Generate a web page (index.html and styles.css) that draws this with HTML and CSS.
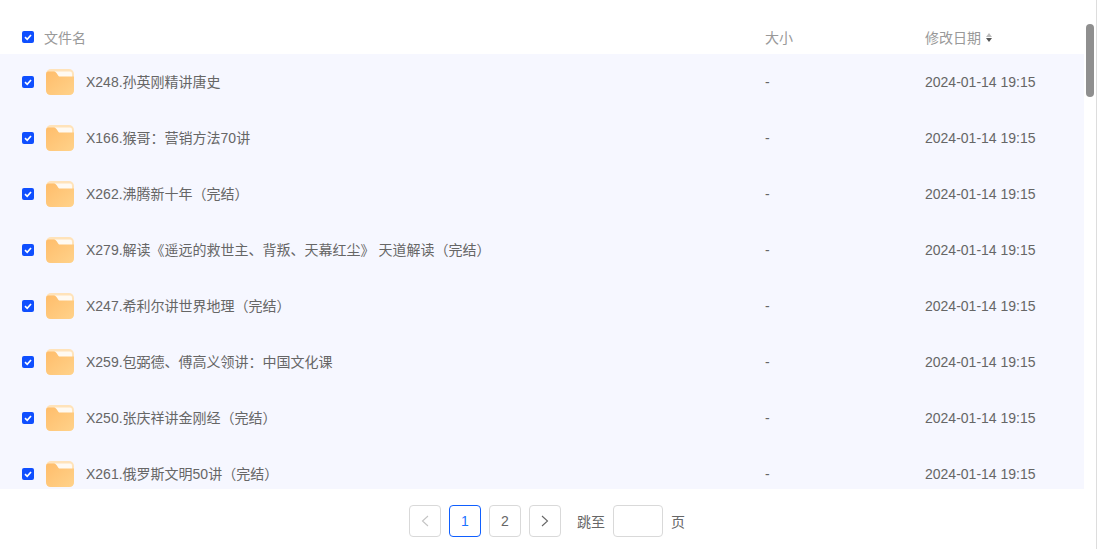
FILE: index.html
```html
<!DOCTYPE html>
<html>
<head>
    <meta charset="UTF-8">
    <title>文件列表</title>
    <link rel="stylesheet" href="styles.css">
</head>
<body>
    <svg class="defs" width="0" height="0">
        <defs>
            <linearGradient id="folderfill" x1="0" y1="0" x2="1" y2="1">
                <stop offset="0" stop-color="#ffbd6b"/>
                <stop offset="1" stop-color="#ffd28a"/>
            </linearGradient>
            <symbol id="folder" viewBox="0 0 28 26">
                <rect width="28" height="26" rx="5" fill="#ffe3ba"/>
                <path d="M9 2.5 H24 Q26 2.5 26 4.5 V8 H12 Z" fill="#fffaf2"/>
                <path d="M0 5 Q0 2.5 2 2.5 H8 Q9.5 2.5 10.5 4 L12.5 7 Q13 7.5 14 7.5 H28 V21 Q28 26 23 26 H5 Q0 26 0 21 Z" fill="url(#folderfill)"/>
            </symbol>
            <symbol id="check" viewBox="0 0 12 12">
                <rect width="12" height="12" rx="2" fill="#0f4fff"/>
                <path d="M3 6.2 L5.2 8.3 L9 4" fill="none" stroke="#fff" stroke-width="1.7"/>
            </symbol>
        </defs>
    </svg>
    <div class="page">
        <div class="head">
            <div class="col-name">
                <svg class="check"><use href="#check"/></svg>
                <span class="head-name">文件名</span>
            </div>
            <div class="col-size">大小</div>
            <div class="col-date">修改日期<span class="sort"><i class="up"></i><i class="down"></i></span></div>
        </div>
        <div class="main">
            <div class="list">
                <div class="row">
                    <div class="col-name"><svg class="check"><use href="#check"/></svg><svg class="folder"><use href="#folder"/></svg><span class="file-name">X248.孙英刚精讲唐史</span></div>
                    <div class="col-size">-</div>
                    <div class="col-date">2024-01-14 19:15</div>
                </div>
                <div class="row">
                    <div class="col-name"><svg class="check"><use href="#check"/></svg><svg class="folder"><use href="#folder"/></svg><span class="file-name">X166.猴哥：营销方法70讲</span></div>
                    <div class="col-size">-</div>
                    <div class="col-date">2024-01-14 19:15</div>
                </div>
                <div class="row">
                    <div class="col-name"><svg class="check"><use href="#check"/></svg><svg class="folder"><use href="#folder"/></svg><span class="file-name">X262.沸腾新十年（完结）</span></div>
                    <div class="col-size">-</div>
                    <div class="col-date">2024-01-14 19:15</div>
                </div>
                <div class="row">
                    <div class="col-name"><svg class="check"><use href="#check"/></svg><svg class="folder"><use href="#folder"/></svg><span class="file-name">X279.解读《遥远的救世主、背叛、天幕红尘》 天道解读（完结）</span></div>
                    <div class="col-size">-</div>
                    <div class="col-date">2024-01-14 19:15</div>
                </div>
                <div class="row">
                    <div class="col-name"><svg class="check"><use href="#check"/></svg><svg class="folder"><use href="#folder"/></svg><span class="file-name">X247.希利尔讲世界地理（完结）</span></div>
                    <div class="col-size">-</div>
                    <div class="col-date">2024-01-14 19:15</div>
                </div>
                <div class="row">
                    <div class="col-name"><svg class="check"><use href="#check"/></svg><svg class="folder"><use href="#folder"/></svg><span class="file-name">X259.包弼德、傅高义领讲：中国文化课</span></div>
                    <div class="col-size">-</div>
                    <div class="col-date">2024-01-14 19:15</div>
                </div>
                <div class="row">
                    <div class="col-name"><svg class="check"><use href="#check"/></svg><svg class="folder"><use href="#folder"/></svg><span class="file-name">X250.张庆祥讲金刚经（完结）</span></div>
                    <div class="col-size">-</div>
                    <div class="col-date">2024-01-14 19:15</div>
                </div>
                <div class="row">
                    <div class="col-name"><svg class="check"><use href="#check"/></svg><svg class="folder"><use href="#folder"/></svg><span class="file-name">X261.俄罗斯文明50讲（完结）</span></div>
                    <div class="col-size">-</div>
                    <div class="col-date">2024-01-14 19:15</div>
                </div>
            </div>
        </div>
        <div class="pager">
            <button class="page-btn disabled"><svg width="10" height="12" viewBox="0 0 10 12"><path d="M8 1 L2.5 6 L8 11" fill="none" stroke="#c4c4c4" stroke-width="1.1"/></svg></button>
            <button class="page-btn current">1</button>
            <button class="page-btn">2</button>
            <button class="page-btn"><svg width="10" height="12" viewBox="0 0 10 12"><path d="M2 1 L7.5 6 L2 11" fill="none" stroke="#666" stroke-width="1.1"/></svg></button>
            <span class="jump">跳至</span>
            <input class="jump-input" type="text">
            <span class="jump-end">页</span>
        </div>
        <div class="thumb"></div>
    </div>
</body>
</html>
```

FILE: styles.css
```css
*{
    margin: 0;
    padding: 0;
    box-sizing: border-box;
}
html,body{
    height: 100%;
    overflow: hidden;
}
body{
    background-color: white;
    font-family: "Liberation Sans", "Noto Sans CJK SC", sans-serif;
    font-size: 14px;
    color: #666;
}
.defs{
    position: absolute;
}
.page{
    position: relative;
    height: 549px;
    display: flex;
    flex-direction: column;
    border-right: 1px solid #ddd;
}
.head{
    height: 54px;
    padding-top: 20px;
    display: flex;
    align-items: center;
    color: #999;
    flex: none;
}
.main{
    height: 435px;
    padding-right: 12px;
    overflow: hidden;
    flex: none;
}
.list{
    background-color: #f6f7ff;
}
.row{
    height: 56px;
    display: flex;
    align-items: center;
}
.col-name{
    width: 765px;
    padding-left: 22px;
    display: flex;
    align-items: center;
    flex: none;
}
.col-size{
    width: 160px;
    flex: none;
}
.col-date{
    flex: 1;
    display: flex;
    align-items: center;
}
.check{
    width: 12px;
    height: 12px;
    flex: none;
}
.head-name{
    margin-left: 10px;
}
.file-name{
    margin-bottom: 2px;
}
.folder{
    width: 28px;
    height: 26px;
    margin-left: 12px;
    margin-right: 12px;
    flex: none;
}
.sort{
    display: inline-flex;
    flex-direction: column;
    gap: 1px;
    margin-left: 5px;
}
.sort i{
    display: block;
    width: 0;
    height: 0;
    border-left: 3.5px solid transparent;
    border-right: 3.5px solid transparent;
}
.sort .up{
    border-bottom: 4px solid #bbb;
}
.sort .down{
    border-top: 4px solid #555;
}
.pager{
    flex: 1;
    display: flex;
    align-items: center;
    justify-content: center;
    padding-right: 2px;
    padding-top: 4px;
}
.page-btn{
    width: 32px;
    height: 32px;
    margin-right: 8px;
    border: 1px solid #d9d9d9;
    border-radius: 4px;
    background-color: white;
    color: #666;
    font-family: inherit;
    font-size: 14px;
    display: flex;
    align-items: center;
    justify-content: center;
}
.page-btn.current{
    border-color: #0f5fff;
    color: #1a73ff;
}
.jump{
    margin-left: 8px;
}
.jump-input{
    width: 50px;
    height: 32px;
    margin-left: 8px;
    margin-right: 8px;
    border: 1px solid #d9d9d9;
    border-radius: 4px;
}
.thumb{
    position: absolute;
    top: 24px;
    right: 2px;
    width: 8px;
    height: 73px;
    border-radius: 4px;
    background-color: #8f8f8f;
}
```
